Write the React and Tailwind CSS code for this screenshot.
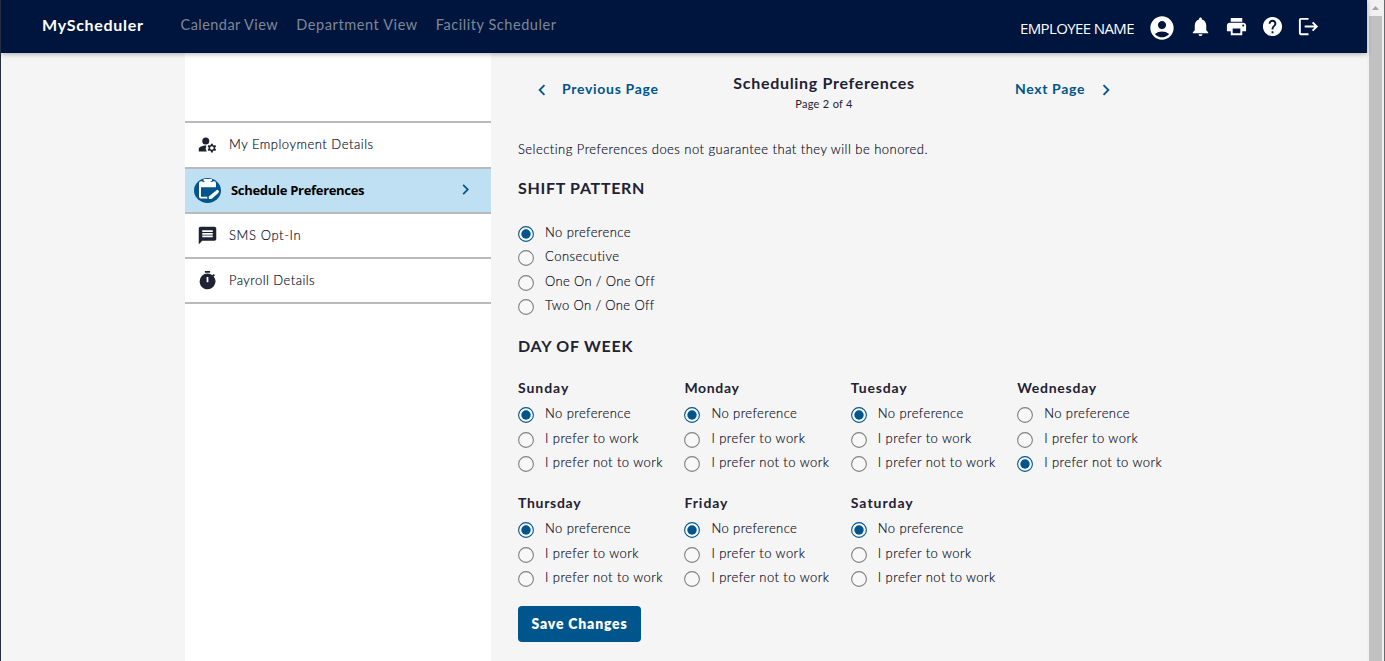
import React from "react";
import {
  MdAccountCircle,
  MdNotifications,
  MdPrint,
  MdHelp,
  MdLogout,
  MdManageAccounts,
  MdMessage,
  MdTimer,
  MdChevronLeft,
  MdChevronRight,
} from "react-icons/md";

const DAY_OPTIONS = [
  { label: "No preference", tracking: "tracking-[0.42px]" },
  { label: "I prefer to work", tracking: "tracking-[0.45px]" },
  { label: "I prefer not to work", tracking: "tracking-[0.45px]" },
];

const SHIFT_OPTIONS = [
  { label: "No preference", tracking: "tracking-[0.42px]" },
  { label: "Consecutive", tracking: "tracking-[0.5px]" },
  { label: "One On / One Off", tracking: "tracking-[0.35px]" },
  { label: "Two On / One Off", tracking: "tracking-[0.37px]" },
];

const DAYS = [
  { name: "Sunday", selected: 0, tracking: "tracking-[0.95px]" },
  { name: "Monday", selected: 0, tracking: "tracking-[0.65px]" },
  { name: "Tuesday", selected: 0, tracking: "tracking-[0.85px]" },
  { name: "Wednesday", selected: 2, tracking: "tracking-[0.75px]" },
  { name: "Thursday", selected: 0, tracking: "tracking-[0.7px]" },
  { name: "Friday", selected: 0, tracking: "tracking-[0.95px]" },
  { name: "Saturday", selected: 0, tracking: "tracking-[1px]" },
];

function Radio({ label, tracking, checked }) {
  return (
    <label className="flex h-[24.5px] items-center">
      <svg viewBox="0 0 16 16" className="size-4 shrink-0">
        <circle cx="8" cy="8" r="7.4" fill={checked ? "#fafafa" : "#f8f8f8"} stroke={checked ? "#00558c" : "#808080"} strokeWidth="1.1" />
        {checked && <circle cx="8" cy="8" r="4.7" fill="#00558c" />}
      </svg>
      <span className={`ml-[11px] -mt-1 whitespace-nowrap text-[13px] font-light leading-5 text-[#05071a] [-webkit-text-stroke:0.15px_#05071a] ${tracking}`}>{label}</span>
    </label>
  );
}

function CalendarEditIcon() {
  return (
    <svg viewBox="0 0 27 25" className="h-[25px] w-[27px]">
      <ellipse cx="13.5" cy="12.500" rx="13.500" ry="12.500" fill="#00558c" />
      <path d="M7 3.200h13a2 2 0 0 1 2 2v13.300a2 2 0 0 1-2 2H7a2 2 0 0 1-2-2V5.200a2 2 0 0 1 2-2z" fill="#fff" />
      <path d="M7 9.300h15.500v11.500H13.500v-2H7z" fill="#00558c" />
      <path d="M9.500 1v3h8.500V1" fill="#fff" />
      <path d="M8.800 1.200v2.400h1.700M18.400 1.200v2.400h-1.700" fill="none" stroke="#00558c" strokeWidth="0.9" />
      <path d="M16.800 19.300L22.500 14.300" stroke="#00558c" strokeWidth="6.500" strokeLinecap="round" />
      <path d="M17.300 18.900L22.300 14.500" stroke="#fff" strokeWidth="3.500" />
      <path d="M22.900 14l.4-.4" stroke="#fff" strokeWidth="3.300" strokeLinecap="round" />
      <path d="M16.300 17.200l2.400 2.800-1.300 1.100H14.800v-2.600z" fill="#fff" />
    </svg>
  );
}

function SideItem({ icon, label, tracking, height = "h-[45px]" }) {
  return (
    <li className={`flex ${height} items-center border-b-2 border-[#bababa] pb-px pl-3`}>
      <span className="flex w-[21px] justify-center">{icon}</span>
      <span className={`-mt-px ml-[11px] whitespace-nowrap text-[13px] font-light leading-5 text-[#05071a] [-webkit-text-stroke:0.15px_#05071a] ${tracking}`}>{label}</span>
    </li>
  );
}

export default function App() {
  return (
    <div className="flex h-[661px] w-[1385px] overflow-hidden border-l border-[#26303c] bg-[#f5f5f5] font-[Lato,sans-serif] text-[#1f2233]">
      <div className="flex w-[1366px] flex-col">
        <header className="z-10 flex h-[53px] shrink-0 items-center bg-[#00153d] shadow-[0_1px_5px_rgba(0,0,0,0.3)]">
          <div className="ml-[41px] w-[138.500px] whitespace-nowrap text-[16px] font-bold leading-6 text-white -mt-1 tracking-[0.7px]">MyScheduler</div>
          <nav className="-mt-1 flex gap-[18px] whitespace-nowrap text-[14.5px] leading-6 text-[#7f8796]">
            <a className="tracking-[0.45px]">Calendar View</a>
            <a className="tracking-[0.6px]">Department View</a>
            <a className="tracking-[0.55px]">Facility Scheduler</a>
          </nav>
          <div className="ml-auto mr-[46px] mt-0.5 flex items-center text-white">
            <span className="mr-[14px] whitespace-nowrap font-['Open_Sans',sans-serif] text-[15px] leading-6 tracking-[-0.6px]">EMPLOYEE NAME</span>
            <MdAccountCircle className="size-7" />
            <div className="-mt-0.5 ml-[15px] flex gap-[12px]">
              <MdNotifications className="-ml-0.5 size-[23px] mr-px" />
              <MdPrint className="size-[23px] mr-px" />
              <MdHelp className="size-[23px] mr-px" />
              <MdLogout className="size-[23px] mr-px" />
            </div>
          </div>
        </header>

        <div className="flex grow">
          <aside className="ml-[184px] w-[306px] shrink-0 bg-white pt-[68px]">
            <ul className="border-t-2 border-[#bababa]">
              <SideItem height="h-[46px]" icon={<MdManageAccounts className="size-[21px] shrink-0" />} label="My Employment Details" tracking="tracking-[0.52px]" />
              <li className="flex h-[45px] items-center border-b-2 border-[#bababa] bg-[#bfdff2] pl-[9px]">
                <CalendarEditIcon />
                <span className="-mt-px ml-2.5 whitespace-nowrap font-['Open_Sans',sans-serif] text-[13px] font-bold leading-5 text-black tracking-[-0.3px]">Schedule Preferences</span>
                <MdChevronRight className="-mt-[3px] ml-auto mr-[15px] size-[21px] text-[#00558c]" />
              </li>
              <SideItem icon={<MdMessage className="size-[21px] shrink-0" />} label="SMS Opt-In" tracking="tracking-[0.6px]" />
              <SideItem icon={<MdTimer className="size-[21px] shrink-0" />} label="Payroll Details" tracking="tracking-[0.45px]" />
            </ul>
          </aside>

          <main className="flex grow flex-col items-start pl-[27px] pt-[20px]">
            <div className="flex h-[39px] w-[612px] whitespace-nowrap">
              <div className="mt-[5px] flex h-5 w-[215px] items-center text-[14px] font-bold text-[#00558c] tracking-[0.7px]">
                <MdChevronLeft className="ml-[13px] mr-[9px] mt-[3px] size-[22px]" />
                Previous Page
              </div>
              <div className="flex w-[182px] flex-col items-center">
                <h1 className="text-[16px] font-bold leading-5 tracking-[0.7px]">Scheduling Preferences</h1>
                <p className="mt-1 text-[11px] leading-[14px] tracking-[0.3px]">Page 2 of 4</p>
              </div>
              <div className="ml-[100px] mt-[5px] flex h-5 items-center text-[14px] font-bold text-[#00558c] tracking-[0.65px]">
                Next Page
                <MdChevronRight className="ml-[10px] mt-[3px] size-[22px]" />
              </div>
            </div>

            <p className="mt-[27px] whitespace-nowrap text-[13px] font-light leading-5 text-[#05071a] [-webkit-text-stroke:0.15px_#05071a] tracking-[0.47px]">Selecting Preferences does not guarantee that they will be honored.</p>

            <h2 className="mt-[17px] whitespace-nowrap text-[16px] font-bold leading-6 tracking-[0.7px]">SHIFT PATTERN</h2>
            <div className="mt-[21.5px]">
              {SHIFT_OPTIONS.map((o, i) => (
                <Radio key={o.label} {...o} checked={i === 0} />
              ))}
            </div>

            <h2 className="mt-[14px] whitespace-nowrap text-[16px] font-bold leading-6 tracking-[0.75px]">DAY OF WEEK</h2>
            <div className="mt-[20px] grid grid-cols-[repeat(4,166.4px)] gap-y-[17px]">
              {DAYS.map((d) => (
                <section key={d.name} className="h-[98px]">
                  <h3 className={`text-[14px] font-bold leading-5 ${d.tracking}`}>{d.name}</h3>
                  <div className="mt-[5.5px]">
                    {DAY_OPTIONS.map((o, i) => (
                      <Radio key={o.label} {...o} checked={i === d.selected} />
                    ))}
                  </div>
                </section>
              ))}
            </div>

            <button className="mt-[15px] h-9 w-[123px] whitespace-nowrap rounded-[4px] bg-[#00558c] text-[14px] font-extrabold text-white tracking-[0.8px]">Save Changes</button>
          </main>
        </div>
      </div>

      <div className="flex w-[17px] shrink-0 flex-col items-center bg-[#f1f1f1]">
        <div className="flex h-4 items-center justify-center">
          <svg viewBox="0 0 7 4" className="h-1 w-[7px]">
            <path d="M0 4L3.500 0 7 4z" fill="#a3a3a3" />
          </svg>
        </div>
        <div className="w-[13px] grow bg-[#c1c1c1]" />
      </div>
      <div className="w-px shrink-0 bg-[#686b6e]" />
    </div>
  );
}
